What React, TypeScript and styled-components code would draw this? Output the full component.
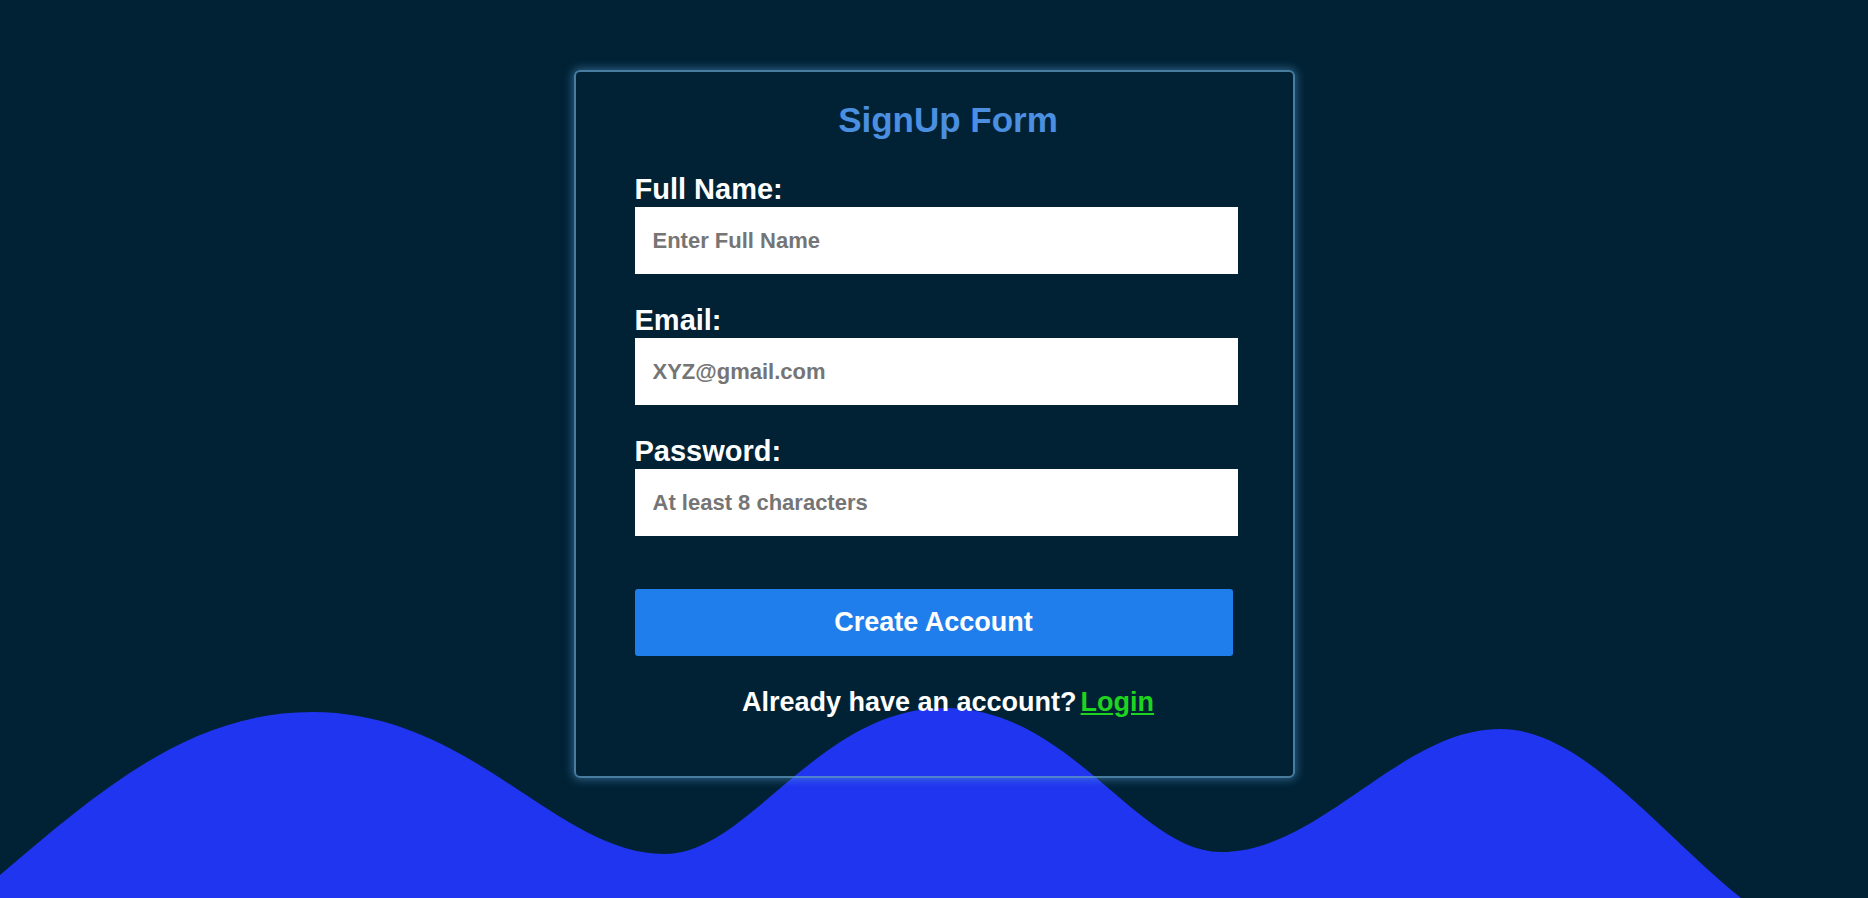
import React from "react";
import styled, { createGlobalStyle } from "styled-components";

const GlobalStyle = createGlobalStyle`
  html, body {
    margin: 0;
    padding: 0;
    background: #012235;
    font-family: "Liberation Sans", Arial, sans-serif;
  }
  * { box-sizing: border-box; }
`;

const Page = styled.div`
  position: relative;
  min-height: 100vh;
  height: 898px;
  overflow: hidden;
  background: #012235;
  display: flex;
  flex-direction: column;
  align-items: center;
  padding-top: 70px;
`;

const WaveLayer = styled.svg`
  position: absolute;
  left: 0;
  bottom: 0;
  width: 1868px;
  height: 198px;
  z-index: 0;
  display: block;
`;

const Card = styled.form`
  position: relative;
  z-index: 1;
  width: 721px;
  border: 2px solid rgba(96, 156, 196, 0.75);
  border-radius: 6px;
  box-shadow: 0 0 9px 2px rgba(90, 160, 215, 0.45);
  background: transparent;
  padding: 30px 31px 60px 59px;
  display: flex;
  flex-direction: column;
`;

const Title = styled.h1`
  margin: 0 0 38px;
  font-size: 35px;
  line-height: 35px;
  font-weight: 700;
  color: #4a8fe0;
  text-align: center;
`;

const Field = styled.div<{ $last?: boolean }>`
  display: flex;
  flex-direction: column;
  gap: 3px;
  margin-bottom: ${(p) => (p.$last ? "53px" : "32px")};
`;

const Label = styled.label`
  font-size: 29px;
  line-height: 29px;
  font-weight: 700;
  color: #ffffff;
`;

const Input = styled.input`
  width: 603px;
  height: 67px;
  border: none;
  border-radius: 0;
  outline: none;
  background: #ffffff;
  padding: 0 18px;
  font-family: "Liberation Sans", Arial, sans-serif;
  font-size: 22px;
  font-weight: 700;
  color: #222;
  &::placeholder {
    color: #757575;
    opacity: 1;
  }
`;

const Button = styled.button`
  width: 598px;
  height: 67px;
  border: none;
  border-radius: 3px;
  background: #207eec;
  color: #ffffff;
  font-family: "Liberation Sans", Arial, sans-serif;
  font-size: 27px;
  font-weight: 700;
  cursor: pointer;
  margin-bottom: 33px;
`;

const Footer = styled.p`
  margin: 0;
  font-size: 27px;
  line-height: 27px;
  font-weight: 700;
  color: #ffffff;
  text-align: center;
`;

const LoginLink = styled.a`
  color: #1ed41e;
  text-decoration: underline;
  margin-left: 4px;
`;

export default function App() {
  return (
    <>
      <GlobalStyle />
      <Page>
        <WaveLayer viewBox="0 0 1868 198" aria-hidden="true">
          <path
            fill="#1f35f0"
            d="M0,175 C100,90 190,12 312,12 C473,12 556,154 664,154 C750,154 817,8 945,8 C1071,8 1137,152 1221,152 C1321,152 1400,29 1500,29 C1590,29 1670,150 1770,220 L1770,260 L0,260 Z"
          />
        </WaveLayer>
        <Card onSubmit={(e) => e.preventDefault()}>
          <Title>SignUp Form</Title>
          <Field>
            <Label htmlFor="name">Full Name:</Label>
            <Input id="name" type="text" placeholder="Enter Full Name" />
          </Field>
          <Field>
            <Label htmlFor="email">Email:</Label>
            <Input id="email" type="email" placeholder="XYZ@gmail.com" />
          </Field>
          <Field $last>
            <Label htmlFor="password">Password:</Label>
            <Input id="password" type="password" placeholder="At least 8 characters" />
          </Field>
          <Button type="submit">Create Account</Button>
          <Footer>
            Already have an account?<LoginLink href="#">Login</LoginLink>
          </Footer>
        </Card>
      </Page>
    </>
  );
}
